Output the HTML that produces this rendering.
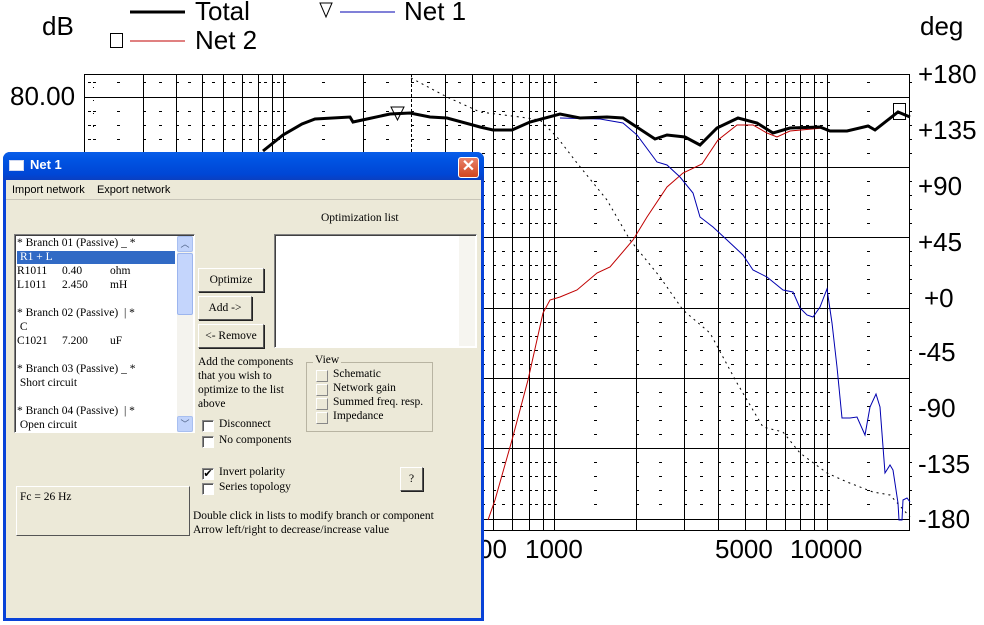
<!DOCTYPE html>
<html><head><meta charset="utf-8">
<style>
*{margin:0;padding:0;box-sizing:border-box}
body{width:984px;height:625px;background:#fff;position:relative;overflow:hidden;font-family:"Liberation Sans",Arial,sans-serif}
.a{position:absolute;white-space:nowrap}
.big{font-size:26px;color:#000}
#dlg{position:absolute;left:3px;top:152px;width:481px;height:469px;background:#ece9d8;border:3px solid #0842d8;border-top:none;border-radius:7px 7px 0 0}
#tb{position:absolute;left:-3px;top:0;width:481px;height:28px;background:linear-gradient(#0a5ee8,#0053e2 30%,#0046d5 80%,#0a3fc0);border-radius:7px 7px 0 0}
.s{font-family:"Liberation Serif",serif;font-size:11.5px;color:#000}
.btn{position:absolute;background:#ece9d8;border:1px solid;border-color:#fff #555 #555 #fff;box-shadow:1px 1px 0 #222;font-family:"Liberation Serif",serif;font-size:11.5px;text-align:center}
.cb{position:absolute;width:12px;height:12px;background:#fff;border:1px solid;border-color:#888 #fff #fff #888;box-shadow:inset 1px 1px 0 #555}
.vb{position:absolute;width:12px;height:12px;background:#ece9d8;border:1px solid;border-color:#fff #888 #888 #fff}
</style></head><body>

<svg class="a" style="left:0;top:0" width="984" height="625" id="ch">
<g id="grid" stroke="#000" stroke-width="1" shape-rendering="crispEdges"></g>
<rect x="84.5" y="74.5" width="825" height="456" fill="none" stroke="#000"/>
<polyline fill="none" stroke="#000" stroke-width="1" stroke-dasharray="2,4" points="411,78 447,97 480,112 520,117 540,120 557,137 577,163 607,200 630,240 660,277 683,310 710,333 737,383 763,427 783,432 800,453 827,473 847,482 873,492 890,495 910,517"/>
<polyline fill="none" stroke="#c00000" stroke-width="1" points="488,520 495,500 512,440 528,380 543,313 550,300 560,297 577,290 597,273 610,267 633,240 647,217 667,187 683,173 702,164 718,140 737,125 753,125 767,133 777,137 790,131 823,128 827,131"/>
<polyline fill="none" stroke="#0000b0" stroke-width="1" points="560,118 600,119 623,123 637,135 657,162 667,165 680,177 693,193 700,217 713,227 727,240 743,255 753,270 767,277 783,290 793,292 800,308 807,315 813,317 820,307 827,289 832,323 837,367 842,418 850,418 857,417 865,435 870,407 876,394 880,407 885,473 890,465 893,470 898,503 899,520 902,520 903,500 907,498 910,502"/>
<polyline fill="none" stroke="#000" stroke-width="3" points="263,151 283,135 302,124 315,119 350,117 353,122 367,119 390,114 410,113 430,117 447,118 480,127 493,130 512,130 530,122 560,114 580,118 607,117 623,118 655,139 667,135 685,137 700,145 717,128 738,118 757,123 773,133 790,128 820,127 830,131 847,131 868,126 875,130 898,112 910,117"/>
<rect x="893.5" y="103.5" width="12" height="16" fill="none" stroke="#000"/>
<polygon points="391,107 404,107 397.5,120" fill="none" stroke="#000"/>
<line x1="130" y1="12" x2="185" y2="12" stroke="#000" stroke-width="3"/>
<line x1="130" y1="41" x2="185" y2="41" stroke="#c00000"/>
<line x1="340" y1="12" x2="395" y2="12" stroke="#0000b0"/>
<rect x="110.5" y="33.5" width="12" height="14" fill="none" stroke="#000"/>
<polygon points="320,3 332,3 326,17" fill="none" stroke="#000"/>
</svg>

<div class="a big" style="left:195px;top:-4px">Total</div>
<div class="a big" style="left:195px;top:25px">Net 2</div>
<div class="a big" style="left:404px;top:-4px">Net 1</div>
<div class="a big" style="left:42px;top:11px">dB</div>
<div class="a big" style="left:920px;top:11px">deg</div>
<div class="a big" style="left:10px;top:81px">80.00</div>
<div class="a big" style="left:918px;top:59px">+180</div>
<div class="a big" style="left:918px;top:115px">+135</div>
<div class="a big" style="left:918px;top:171px">+90</div>
<div class="a big" style="left:918px;top:227px">+45</div>
<div class="a big" style="left:924px;top:283px">+0</div>
<div class="a big" style="left:918px;top:337px">-45</div>
<div class="a big" style="left:918px;top:393px">-90</div>
<div class="a big" style="left:918px;top:449px">-135</div>
<div class="a big" style="left:918px;top:504px">-180</div>
<div class="a big" style="left:478px;top:534px">00</div>
<div class="a big" style="left:525px;top:534px">1000</div>
<div class="a big" style="left:715px;top:534px">5000</div>
<div class="a big" style="left:790px;top:534px">10000</div>

<div id="dlg">
 <div id="tb">
  <div class="a" style="left:6px;top:8px;width:15px;height:11px;background:#fff;border:1px solid #cfd8f0"></div>
  <div class="a" style="left:27px;top:5px;color:#fff;font-weight:bold;font-size:13px">Net 1</div>
  <div class="a" style="left:455px;top:5px;width:21px;height:21px;background:linear-gradient(#e8826a,#d2451e);border:1px solid #fff;border-radius:3px;color:#fff;font-size:16px;line-height:18px;text-align:center;font-weight:bold">✕</div>
 </div>
 <div class="a" style="left:0;top:28px;width:475px;height:20px;border-bottom:1px solid #c8c5b8;font-size:11px;line-height:20px;padding-left:6px">Import network&nbsp;&nbsp;&nbsp;&nbsp;Export network</div>
 <div class="a s" style="left:315px;top:60px">Optimization list</div>
 <div class="a" style="left:8px;top:82px;width:181px;height:199px;background:#fff;border:1px solid;border-color:#808080 #fff #fff #808080;box-shadow:inset 1px 1px 0 #404040">
  <div class="a s" style="left:2px;top:1px;line-height:14px">* Branch 01 (Passive) _ *</div>
  <div class="a s" style="left:2px;top:16px;width:158px;height:13px;background:#316ac5;color:#fff;line-height:13px;padding-left:3px">R1 + L</div>
  <div class="a s" style="left:2px;top:29px;line-height:14px">R1011<br>L1011</div>
  <div class="a s" style="left:47px;top:29px;line-height:14px">0.40<br>2.450</div>
  <div class="a s" style="left:95px;top:29px;line-height:14px">ohm<br>mH</div>
  <div class="a s" style="left:2px;top:71px;line-height:14px">* Branch 02 (Passive) &nbsp;| *<br>&nbsp;C</div>
  <div class="a s" style="left:2px;top:99px;line-height:14px">C1021</div>
  <div class="a s" style="left:47px;top:99px;line-height:14px">7.200</div>
  <div class="a s" style="left:95px;top:99px;line-height:14px">uF</div>
  <div class="a s" style="left:2px;top:127px;line-height:14px">* Branch 03 (Passive) _ *<br>&nbsp;Short circuit</div>
  <div class="a s" style="left:2px;top:169px;line-height:14px">* Branch 04 (Passive) &nbsp;| *<br>&nbsp;Open circuit</div>
  <div class="a" style="left:162px;top:1px;width:16px;height:196px;background:#f4f3ee">
   <div class="a" style="left:0;top:0;width:16px;height:16px;background:#c1d3fb;border:1px solid #a8bff0;border-radius:2px;font-size:9px;text-align:center;color:#4d6185">︿</div>
   <div class="a" style="left:0;top:17px;width:16px;height:62px;background:#c4d5fc;border:1px solid #9cb5ee;border-radius:2px"></div>
   <div class="a" style="left:0;top:180px;width:16px;height:16px;background:#c1d3fb;border:1px solid #a8bff0;border-radius:2px;font-size:9px;text-align:center;color:#4d6185">﹀</div>
  </div>
 </div>
 <div class="a" style="left:268px;top:82px;width:203px;height:114px;background:#fff;border:1px solid;border-color:#808080 #fff #fff #808080;box-shadow:inset 1px 1px 0 #404040">
  <div class="a" style="right:1px;top:1px;width:16px;height:110px;background:#f6f5f0"></div>
 </div>
 <div class="btn" style="left:192px;top:116px;width:66px;height:24px;line-height:22px">Optimize</div>
 <div class="btn" style="left:192px;top:144px;width:54px;height:24px;line-height:22px">Add -&gt;</div>
 <div class="btn" style="left:192px;top:172px;width:66px;height:24px;line-height:22px">&lt;- Remove</div>
 <div class="a s" style="left:192px;top:203px;line-height:14px">Add the components<br>that you wish to<br>optimize to the list<br>above</div>
 <div class="a" style="left:300px;top:210px;width:127px;height:70px;border:1px solid #b8b4a2"></div>
 <div class="a s" style="left:307px;top:202px;background:#ece9d8;padding:0 2px">View</div>
 <div class="vb" style="left:310px;top:218px"></div><div class="a s" style="left:327px;top:216px">Schematic</div>
 <div class="vb" style="left:310px;top:232px"></div><div class="a s" style="left:327px;top:230px">Network gain</div>
 <div class="vb" style="left:310px;top:246px"></div><div class="a s" style="left:327px;top:244px">Summed freq. resp.</div>
 <div class="vb" style="left:310px;top:260px"></div><div class="a s" style="left:327px;top:258px">Impedance</div>
 <div class="cb" style="left:196px;top:268px"></div><div class="a s" style="left:213px;top:266px">Disconnect</div>
 <div class="cb" style="left:196px;top:284px"></div><div class="a s" style="left:213px;top:282px">No components</div>
 <div class="cb" style="left:196px;top:316px;font-size:11px;line-height:10px;text-align:center">✔</div><div class="a s" style="left:213px;top:314px">Invert polarity</div>
 <div class="cb" style="left:196px;top:331px"></div><div class="a s" style="left:213px;top:329px">Series topology</div>
 <div class="btn" style="left:394px;top:315px;width:23px;height:24px;line-height:22px">?</div>
 <div class="a s" style="left:10px;top:334px;width:174px;height:50px;border:1px solid;border-color:#fff #555 #555 #fff;padding:4px 3px">Fc = 26 Hz</div>
 <div class="a s" style="left:187px;top:357px;line-height:14px">Double click in lists to modify branch or component<br>Arrow left/right to decrease/increase value</div>
</div>

<script>
(function(){
var g=document.getElementById('grid'),ns='http://www.w3.org/2000/svg';
function L(x1,y1,x2,y2,d){var l=document.createElementNS(ns,'line');l.setAttribute('x1',x1);l.setAttribute('y1',y1);l.setAttribute('x2',x2);l.setAttribute('y2',y2);if(d)l.setAttribute('stroke-dasharray',d);g.appendChild(l);}
var xs=[84,93,143,176,202,223,242,258,272,283,363,411,445,472,493,512,529,543,554,636,684,718,745,766,785,800,814,827,909];
var hs=[97,167,237,308,378,448,519];
xs.forEach(function(x,i){if(i==0||i==xs.length-1)return;if(x==411)L(x+.5,74,x+.5,530,'3,2');else if(x==93)L(x+.5,74,x+.5,530,'1,12');else L(x+.5,74,x+.5,530);});
hs.forEach(function(y){L(84,y+.5,909,y+.5);});
var ys=[82];hs.forEach(function(y,i){if(i<hs.length-1)for(var k=1;k<5;k++)ys.push(y+14*k);});
for(var i=0;i<xs.length-1;i++){var m=Math.round((xs[i]+xs[i+1])/2);ys.forEach(function(y){L(m-1,y+.5,m+2,y+.5);L(xs[i+1],y+.5,xs[i+1]+3,y+.5);});}
})();
</script>
</body></html>
